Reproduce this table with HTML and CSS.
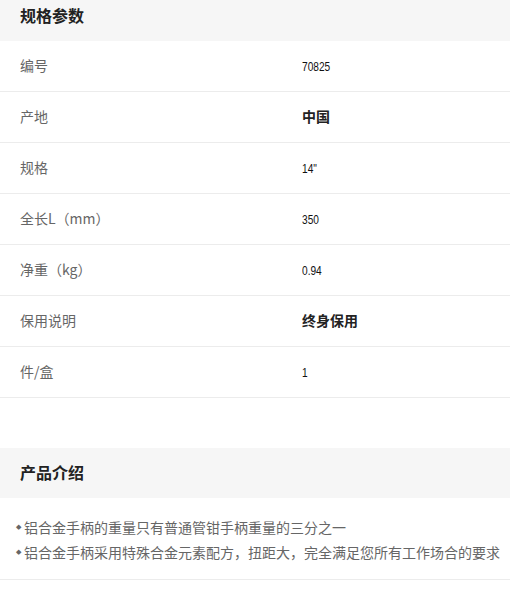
FILE: index.html
```html
<!DOCTYPE html>
<html lang="zh">
<head>
<meta charset="utf-8">
<title>规格参数</title>
<link rel="stylesheet" href="styles.css">
</head>
<body>
<section class="spec">
  <h2 class="sec-title first">规格参数</h2>
  <div class="spec-list">
    <div class="row"><span class="label">编号</span><span class="val"><span class="num">70825</span></span></div>
    <div class="row"><span class="label">产地</span><span class="val strong">中国</span></div>
    <div class="row"><span class="label">规格</span><span class="val"><span class="num">14"</span></span></div>
    <div class="row"><span class="label">全长L（mm）</span><span class="val"><span class="num">350</span></span></div>
    <div class="row"><span class="label">净重（kg）</span><span class="val"><span class="num">0.94</span></span></div>
    <div class="row"><span class="label">保用说明</span><span class="val strong">终身保用</span></div>
    <div class="row"><span class="label">件/盒</span><span class="val"><span class="num">1</span></span></div>
  </div>
</section>
<section class="intro">
  <h2 class="sec-title">产品介绍</h2>
  <ul class="intro-list">
    <li><span class="dot">◆</span>铝合金手柄的重量只有普通管钳手柄重量的三分之一</li>
    <li><span class="dot">◆</span>铝合金手柄采用特殊合金元素配方，扭距大，完全满足您所有工作场合的要求</li>
  </ul>
</section>
</body>
</html>
```
FILE: styles.css
```css
html, body {
  margin: 0;
  padding: 0;
  background: #fff;
}
body {
  font-family: "Noto Sans CJK SC", "Liberation Sans", sans-serif;
  color: #333;
  overflow: hidden;
}
.sec-title {
  margin: 0;
  height: 50px;
  box-sizing: border-box;
  display: flex;
  align-items: center;
  padding: 0 0 2px 20px;
  background: #f6f6f6;
  font-size: 16px;
  font-weight: bold;
  color: #222;
}
.sec-title.first {
  margin-top: -9px;
}
.spec {
  padding-bottom: 50px;
}
.row {
  display: grid;
  grid-template-columns: 282px 1fr;
  align-items: center;
  height: 50px;
  box-sizing: content-box;
  padding-left: 20px;
  border-bottom: 1px solid #ececec;
}
.label,
.val {
  position: relative;
  top: -1px;
}
.label {
  font-size: 14px;
  color: #666;
}
.val {
  font-size: 14px;
  color: #333;
}
.num {
  display: inline-block;
  font-family: "Liberation Sans", sans-serif;
  font-size: 13px;
  color: #111;
  transform: scaleX(0.78);
  transform-origin: left center;
}
.val.strong {
  font-weight: bold;
  color: #222;
}
.intro-list {
  list-style: none;
  margin: 0;
  padding: 16px 0 15px 16px;
  border-bottom: 1px solid #ececec;
}
.intro-list li {
  display: flex;
  align-items: center;
  height: 25px;
  font-size: 14px;
  color: #666;
  white-space: nowrap;
}
.dot {
  font-size: 7px;
  width: 8px;
  color: #666;
  font-family: "DejaVu Sans", sans-serif;
}
```
